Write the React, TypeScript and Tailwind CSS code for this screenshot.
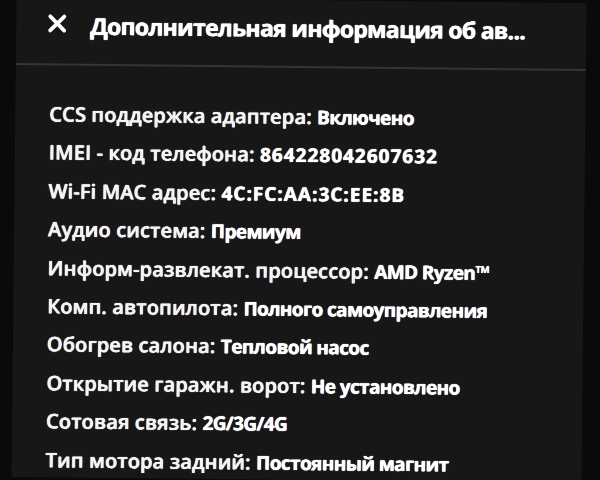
import { X } from 'lucide-react';

const rows: { label: string; value: string; wide?: boolean }[] = [
  { label: 'CCS поддержка адаптера:', value: 'Включено' },
  { label: 'IMEI - код телефона:', value: '864228042607632', wide: true },
  { label: 'Wi-Fi MAC адрес:', value: '4C:FC:AA:3C:EE:8B', wide: true },
  { label: 'Аудио система:', value: 'Премиум' },
  { label: 'Информ-развлекат. процессор:', value: 'AMD Ryzen™' },
  { label: 'Комп. автопилота:', value: 'Полного самоуправления' },
  { label: 'Обогрев салона:', value: 'Тепловой насос' },
  { label: 'Открытие гаражн. ворот:', value: 'Не установлено' },
  { label: 'Сотовая связь:', value: '2G/3G/4G' },
  { label: 'Тип мотора задний:', value: 'Постоянный магнит' },
];

export default function App() {
  return (
    <div className="h-[480px] w-[600px] overflow-hidden bg-[#0a0a0a] pl-[14px] pr-[16px]">
      <div
        className="h-full w-full rotate-[0.6deg] bg-[#171717] text-[#f4f4f4] [text-shadow:0_0_0.7px_#ffffff,0_0_0.7px_#ffffff]"
        style={{ fontFamily: '"Open Sans", "Noto Sans", sans-serif' }}
      >
        {/* header */}
        <div className="flex h-[68px] items-center gap-[19px] border-b-2 border-[#353535] pb-[10px] pl-[27px]">
          <X className="-mt-[4px] h-[28px] w-[28px] text-white" strokeWidth={3.3} />
          <h1 className="text-[23px] font-bold tracking-[-0.7px] text-white">
            Дополнительная информация об ав...
          </h1>
        </div>

        {/* info rows */}
        <div className="flex flex-col gap-[12px] pl-[34px] pt-[36px]">
          {rows.map((r) => (
            <p key={r.label} className="text-[20px] font-semibold leading-[26.4px] tracking-[0.15px]">
              {r.label}{' '}
              <span
                className={
                  r.wide
                    ? 'text-[19px] font-bold tracking-[1px] text-white'
                    : 'text-[19px] font-bold tracking-[-0.6px] text-white'
                }
              >
                {r.value}
              </span>
            </p>
          ))}
        </div>
      </div>
    </div>
  );
}
